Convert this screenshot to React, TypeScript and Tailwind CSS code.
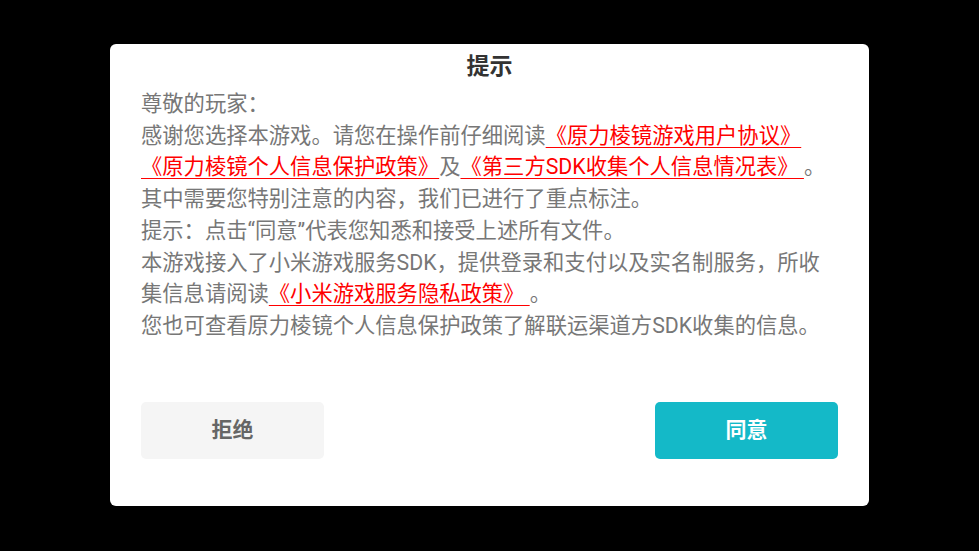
import React from "react";

const font = { fontFamily: "Roboto, 'Noto Sans CJK SC', sans-serif" };

function Link({ children }: { children: React.ReactNode }) {
  return <span className="text-[#ff0000] underline underline-offset-[4px] decoration-1">{children}</span>;
}

export default function App() {
  return (
    <div className="w-[979px] h-[551px] bg-black flex justify-center pt-[44px]" style={font}>
      <div className="w-[759px] h-[462px] bg-white rounded-[6px] flex flex-col">
        <h1 className="pt-[7px] text-center text-[23px] leading-[32px] font-bold text-[#333333]">提示</h1>
        <div className="mt-[5px] px-[31px] text-[21.3px] leading-[31.7px] text-[#777777]">
          <p>尊敬的玩家：</p>
          <p>
            感谢您选择本游戏。请您在操作前仔细阅读<Link>《原力棱镜游戏用户协议》 </Link>
            <Link>《原力棱镜个人信息保护政策》</Link>及<Link>《第三方SDK收集个人信息情况表》 </Link>。
          </p>
          <p>其中需要您特别注意的内容，我们已进行了重点标注。</p>
          <p>提示：点击“同意”代表您知悉和接受上述所有文件。</p>
          <p>
            本游戏接入了小米游戏服务SDK，提供登录和支付以及实名制服务，所收集信息请阅读<Link>《小米游戏服务隐私政策》 </Link>。
          </p>
          <p>您也可查看原力棱镜个人信息保护政策了解联运渠道方SDK收集的信息。</p>
        </div>
        <div className="mt-auto mb-[47px] px-[31px] flex justify-between">
          <button className="w-[183px] h-[57px] rounded-[5px] bg-[#f5f5f5] text-[21px] font-bold text-[#666666]">拒绝</button>
          <button className="w-[183px] h-[57px] rounded-[5px] bg-[#14b9c8] text-[21px] font-bold text-white">同意</button>
        </div>
      </div>
    </div>
  );
}
